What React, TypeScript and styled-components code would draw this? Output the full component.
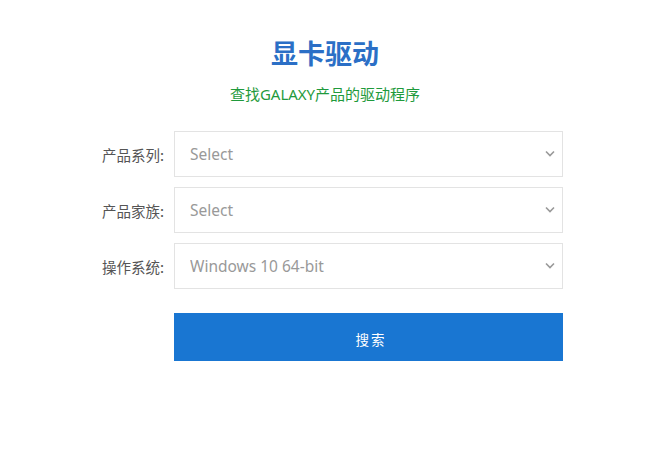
import React from "react";
import styled, { createGlobalStyle } from "styled-components";

const Global = createGlobalStyle`
  html, body { margin: 0; padding: 0; background: #fff; }
  body { font-family: "Noto Sans", "Noto Sans CJK SC", sans-serif; }
`;

const Page = styled.div`
  width: 650px;
  padding-top: 33px;
  box-sizing: border-box;
`;

const Header = styled.header`
  display: flex;
  flex-direction: column;
  align-items: center;
`;

const Title = styled.h1`
  margin: 0;
  font-family: "Noto Sans CJK SC", sans-serif;
  font-size: 27px;
  font-weight: 700;
  line-height: 40px;
  color: #2b6fc6;
`;

const Subtitle = styled.p`
  margin: 11px 0 0;
  font-family: "Noto Sans", "Noto Sans CJK SC", sans-serif;
  font-size: 15px;
  line-height: 20px;
  color: #1f9a3c;
`;

const Form = styled.form`
  margin-top: 27px;
  display: grid;
  grid-template-columns: 164px 389px;
  column-gap: 10px;
  row-gap: 10px;
  align-items: center;
`;

const Label = styled.label`
  text-align: right;
  font-family: "Noto Sans CJK SC", sans-serif;
  font-size: 14.5px;
  color: #555;
`;

const SelectWrap = styled.div`
  position: relative;
  height: 46px;
`;

const Select = styled.select`
  appearance: none;
  -webkit-appearance: none;
  width: 100%;
  height: 100%;
  box-sizing: border-box;
  border: 1px solid #e3e3e3;
  background: #fff;
  padding: 0 36px 0 15px;
  font-family: "Noto Sans", "Noto Sans CJK SC", sans-serif;
  font-size: 15.5px;
  color: #999;
  outline: none;
  border-radius: 0;
`;

const Chevron = styled.svg`
  position: absolute;
  right: 8px;
  top: 50%;
  margin-top: -4px;
  width: 10px;
  height: 7px;
  pointer-events: none;
`;

const ButtonCell = styled.div`
  grid-column: 2;
  margin-top: 14px;
`;

const Button = styled.button`
  width: 100%;
  height: 48px;
  border: none;
  background: #1976d2;
  color: #fff;
  font-family: "Noto Sans CJK SC", sans-serif;
  font-size: 13.5px;
  letter-spacing: 2px;
  padding: 3px 0 0 5px;
  cursor: pointer;
`;

const fields = [
  { label: "产品系列:", value: "Select" },
  { label: "产品家族:", value: "Select" },
  { label: "操作系统:", value: "Windows 10 64-bit" },
];

export default function App() {
  return (
    <Page>
      <Global />
      <Header>
        <Title>显卡驱动</Title>
        <Subtitle>查找GALAXY产品的驱动程序</Subtitle>
      </Header>
      <Form onSubmit={(e) => e.preventDefault()}>
        {fields.map((f) => (
          <React.Fragment key={f.label}>
            <Label>{f.label}</Label>
            <SelectWrap>
              <Select defaultValue={f.value}>
                <option>{f.value}</option>
              </Select>
              <Chevron viewBox="0 0 10 7">
                <path d="M1 1.5 L5 5.5 L9 1.5" fill="none" stroke="#999" strokeWidth="1.6" />
              </Chevron>
            </SelectWrap>
          </React.Fragment>
        ))}
        <ButtonCell>
          <Button type="submit">搜索</Button>
        </ButtonCell>
      </Form>
    </Page>
  );
}
